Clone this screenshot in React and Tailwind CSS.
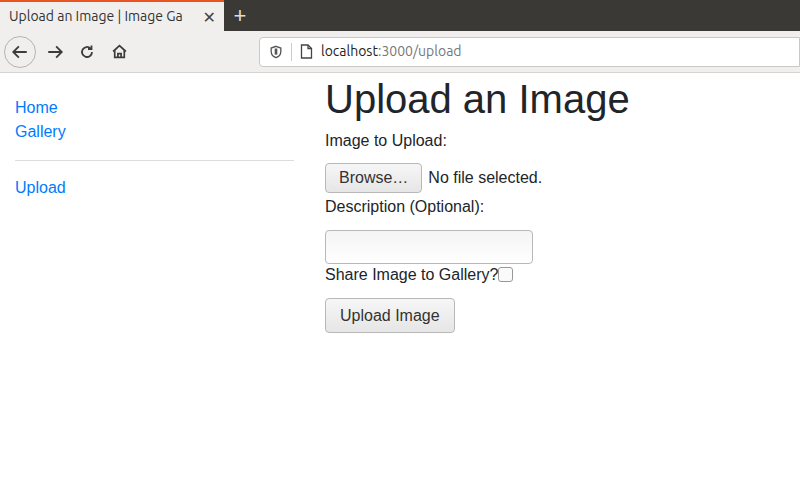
export default function App(){
const f={fontFamily:'"Liberation Sans",Arial,sans-serif'};
const u={fontFamily:'Ubuntu,"DejaVu Sans","Open Sans",sans-serif'};
return(<div className="w-[800px] h-[500px] bg-white overflow-hidden" style={f}>
<div className="h-[31px] bg-[#3a3935] flex">
<div className="w-[224px] bg-[#f0efee] border-t-2 border-[#e95420] flex items-center pl-[9px] pr-[8px] text-[14px] text-[#333]" style={u}>
<span className="whitespace-nowrap overflow-hidden flex-1">Upload an Image | Image Ga</span>
<span className="text-[16px] text-[#444] ml-1">✕</span></div>
<div className="w-[32px] flex items-center justify-center text-[#ddd] text-[22px] font-light">+</div>
</div>
<div className="h-[42px] bg-[#f0efee] border-b border-[#d4d3d1] flex items-center pl-[4px]">
<div className="w-[32px] h-[32px] rounded-full border border-[#b5b4b2] flex items-center justify-center">
<svg width="18" height="18" viewBox="0 0 16 16" fill="none" stroke="#3c3c3c" strokeWidth="1.6"><path d="M14 8H2.5M7 3L2 8l5 5"/></svg></div>
<svg className="ml-[10px]" width="18" height="18" viewBox="0 0 16 16" fill="none" stroke="#3c3c3c" strokeWidth="1.6"><path d="M2 8h11.5M9 3l5 5-5 5"/></svg>
<svg className="ml-[15px]" width="16" height="16" viewBox="0 0 16 16" fill="none" stroke="#3c3c3c" strokeWidth="1.8"><path d="M13 8a5 5 0 1 1-1.5-3.6"/><path d="M12.5 1.5v3.5H9" /></svg>
<svg className="ml-[16px]" width="17" height="17" viewBox="0 0 16 16" fill="none" stroke="#3c3c3c" strokeWidth="1.6"><path d="M2 8L8 2.5 14 8M3.5 7v6.5h9V7M6.5 13.5V10h3v3.5"/></svg>
<div className="ml-[131px] flex-1 h-[30px] bg-white border border-[#c9c8c6] rounded-l-[4px] flex items-center pl-[9px] text-[14px]" style={u}>
<svg width="14" height="14" viewBox="0 0 16 16" fill="none" stroke="#555" strokeWidth="1.5"><path d="M8 1.5l5.5 2v4c0 3.5-2.5 6-5.5 7-3-1-5.5-3.5-5.5-7v-4z"/><path d="M8 4v7" strokeWidth="3"/></svg>
<div className="w-px h-[18px] bg-[#ccc] mx-[8px]"/>
<svg width="13" height="15" viewBox="0 0 13 15" fill="none" stroke="#444" strokeWidth="1.3"><path d="M1.5 1h6.5l3.5 3.5V14h-10z"/><path d="M8 1v3.5h3.5"/></svg>
<span className="ml-[8px] text-[#222]">localhost<span className="text-[#777]">:3000/upload</span></span>
</div></div>
<div className="flex">
<div className="w-[279px] ml-[15px] pt-[23px] text-[16px] text-[#007bff]">
<div className="leading-[24px]">Home</div><div className="leading-[24px]">Gallery</div>
<div className="border-t border-[#ddd] my-[16px]"/>
<div className="leading-[24px] -mt-[1px]">Upload</div>
</div>
<div className="ml-[31px] text-[16px] text-[#212529]">
<h1 className="text-[40px] leading-[48px] mt-[2px] mb-[8px]">Upload an Image</h1>
<div className="leading-[20px]">Image to Upload:</div>
<div className="flex items-center mt-[12px]"><button className="h-[30px] px-[13px] border border-[#b8b8b8] rounded-[4px] bg-gradient-to-b from-[#f6f6f6] to-[#e6e6e6] text-[#333]">Browse…</button><span className="ml-[6px]">No file selected.</span></div>
<div className="leading-[20px] mt-[4px]">Description (Optional):</div>
<div className="mt-[13px] w-[208px] h-[34px] border border-[#b8b8b8] rounded-[4px] bg-gradient-to-b from-[#f4f4f4] to-white"/>
<div className="flex items-start leading-[20px] mt-[1px]">Share Image to Gallery?<span className="w-[15px] h-[15px] mt-[2px] border border-[#999] rounded-[3px] bg-[#fafafa]"/></div>
<button className="mt-[13px] h-[35px] px-[14px] border border-[#b8b8b8] rounded-[4px] bg-gradient-to-b from-[#f6f6f6] to-[#e6e6e6] text-[#333]">Upload Image</button>
</div></div></div>);}
